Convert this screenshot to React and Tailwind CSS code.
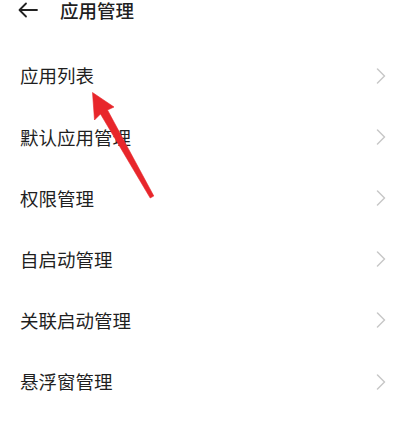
const items = ['应用列表', '默认应用管理', '权限管理', '自启动管理', '关联启动管理', '悬浮窗管理']

const Chevron = () => (
  <svg width="10" height="16" viewBox="0 0 10 16" fill="none">
    <path d="M1.5 1 L8.5 8 L1.5 15" stroke="#c8c8c8" strokeWidth="1.5" strokeLinecap="round" strokeLinejoin="round" />
  </svg>
)

export default function App() {
  return (
    <div className="relative w-[404px] h-[431px] bg-white overflow-hidden text-[#1f1f1f]" style={{ fontFamily: '"Noto Sans CJK SC", "Noto Sans", sans-serif' }}>
      <div className="flex items-center h-[20px] pl-[18px]">
        <svg width="20" height="16" viewBox="0 0 20 16" fill="none">
          <path d="M19 8 H2 M8 1.5 L1.5 8 L8 14.5" stroke="#222" strokeWidth="1.8" strokeLinecap="round" strokeLinejoin="round" />
        </svg>
        <span className="ml-[22px] text-[18.5px] font-medium leading-[20px]">应用管理</span>
      </div>

      <div className="mt-[25px]">
        {items.map((t, i) => (
          <div key={i} className="flex items-center justify-between h-[61.2px] pl-[20px] pr-[18px]">
            <span className="text-[18.5px] leading-none">{t}</span>
            <Chevron />
          </div>
        ))}
      </div>

      {/* red annotation arrow */}
      <svg className="absolute left-0 top-0" width="404" height="431" viewBox="0 0 404 431">
        <polygon
          points="92.5,92.5 114,107 107.5,110 153.8,196 150.2,198 100.5,114 94.5,120"
          fill="#e8262b"
          stroke="#e8262b"
          strokeWidth="0.6"
          strokeLinejoin="round"
        />
      </svg>
    </div>
  )
}
